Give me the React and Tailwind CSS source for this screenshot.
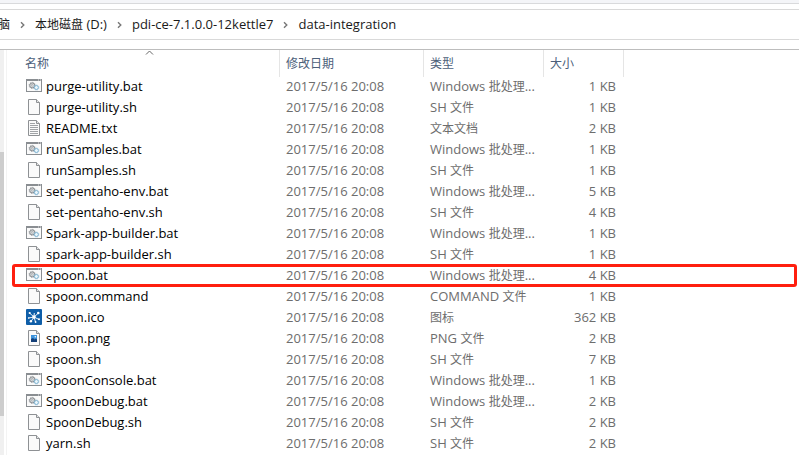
import React from "react";

const DATE = "2017/5/16 20:08";

const FILES = [
  { name: "purge-utility.bat", kind: "bat", type: ["Windows ", "批处理", "..."], size: "1 KB" },
  { name: "purge-utility.sh", kind: "file", type: ["SH ", "文件"], size: "1 KB" },
  { name: "README.txt", kind: "text", type: ["", "文本文档"], size: "2 KB" },
  { name: "runSamples.bat", kind: "bat", type: ["Windows ", "批处理", "..."], size: "1 KB" },
  { name: "runSamples.sh", kind: "file", type: ["SH ", "文件"], size: "1 KB" },
  { name: "set-pentaho-env.bat", kind: "bat", type: ["Windows ", "批处理", "..."], size: "5 KB" },
  { name: "set-pentaho-env.sh", kind: "file", type: ["SH ", "文件"], size: "4 KB" },
  { name: "Spark-app-builder.bat", kind: "bat", type: ["Windows ", "批处理", "..."], size: "1 KB" },
  { name: "spark-app-builder.sh", kind: "file", type: ["SH ", "文件"], size: "1 KB" },
  { name: "Spoon.bat", kind: "bat", type: ["Windows ", "批处理", "..."], size: "4 KB", marked: true },
  { name: "spoon.command", kind: "file", type: ["COMMAND ", "文件"], size: "1 KB" },
  { name: "spoon.ico", kind: "spoon", type: ["", "图标"], size: "362 KB" },
  { name: "spoon.png", kind: "image", type: ["PNG ", "文件"], size: "2 KB" },
  { name: "spoon.sh", kind: "file", type: ["SH ", "文件"], size: "7 KB" },
  { name: "SpoonConsole.bat", kind: "bat", type: ["Windows ", "批处理", "..."], size: "1 KB" },
  { name: "SpoonDebug.bat", kind: "bat", type: ["Windows ", "批处理", "..."], size: "2 KB" },
  { name: "SpoonDebug.sh", kind: "file", type: ["SH ", "文件"], size: "2 KB" },
  { name: "yarn.sh", kind: "file", type: ["SH ", "文件"], size: "2 KB" },
];

function BatIcon() {
  return (
    <svg viewBox="0 0 16 16" className="h-4 w-4 shrink-0" aria-hidden="true">
      <rect x="0.5" y="1.5" width="15" height="12" fill="#fafafa" stroke="#8a8e92" />
      <rect x="0" y="1" width="16" height="2" fill="#8a8e92" />
      <path d="M12 2h1M14 2h1" stroke="#fff" strokeWidth="0.8" />
      <circle cx="6.2" cy="7.4" r="2.5" fill="#e0e2e4" stroke="#85898d" />
      <circle cx="6.2" cy="7.4" r="3.1" fill="none" stroke="#85898d" strokeWidth="0.7" strokeDasharray="1.2 1.2" />
      <circle cx="6.2" cy="7.4" r="0.9" fill="#fff" stroke="#85898d" strokeWidth="0.6" />
      <circle cx="10.4" cy="9.5" r="2" fill="#eaf6fc" stroke="#7fb2d0" />
      <circle cx="10.4" cy="9.5" r="2.6" fill="none" stroke="#7fb2d0" strokeWidth="0.6" strokeDasharray="1 1" />
    </svg>
  );
}

function PageIcon({ children }) {
  return (
    <svg viewBox="0 0 16 16" className="h-4 w-4 shrink-0" aria-hidden="true">
      <path d="M2.5 0.5h8l3 3v12h-11z" fill="#fafafa" stroke="#8e9194" />
      <path d="M10.5 0.5v3h3" fill="#e4e5e6" stroke="#8e9194" />
      {children}
    </svg>
  );
}

function SpoonIcon() {
  return (
    <svg viewBox="0 0 16 16" className="h-4 w-4 shrink-0" aria-hidden="true">
      <rect width="16" height="16" rx="1" fill="#0f5ea8" />
      <path d="M3.5 4 8 8l4.5-4M2.5 9 8 8l5 2.5M5 12.5 8 8l1.5 5M8 8l.3-4" stroke="#fff" strokeWidth="0.9" fill="none" />
      <circle cx="8" cy="8" r="1.8" fill="#fff" />
      <circle cx="3.7" cy="4" r="1.1" fill="#fff" />
      <circle cx="12.3" cy="4" r="1.3" fill="#fff" />
      <circle cx="2.7" cy="9" r="0.8" fill="#fff" />
      <circle cx="13" cy="10.3" r="1" fill="#fff" />
      <circle cx="4.9" cy="12.3" r="1.2" fill="#fff" />
      <circle cx="9.6" cy="13" r="0.9" fill="#fff" />
    </svg>
  );
}

function FileIcon({ kind }) {
  if (kind === "bat") return <BatIcon />;
  if (kind === "spoon") return <SpoonIcon />;
  if (kind === "text") {
    return (
      <PageIcon>
        <path d="M4 3.5h5M4 5.5h8M4 7.5h8M4 9.5h8M4 11.5h8M4 13.5h8" stroke="#a0a3a6" />
      </PageIcon>
    );
  }
  if (kind === "image") {
    return (
      <PageIcon>
        <rect x="5" y="5" width="6" height="7" fill="#3d93dc" />
        <path d="M5 12V9l2-1 1.5 1.5L10 8.5l1 1V12z" fill="#153f78" />
        <circle cx="9.3" cy="6.7" r="0.8" fill="#fff" />
      </PageIcon>
    );
  }
  return <PageIcon />;
}

function Chevron() {
  return (
    <svg viewBox="0 0 5 8" className="h-2 w-[5px] shrink-0" aria-hidden="true">
      <path d="M1 1.2 3.8 4 1 6.8" fill="none" stroke="#777" strokeWidth="1.4" />
    </svg>
  );
}

function AddressBar() {
  return (
    <nav
      aria-label="路径"
      className="mt-[5px] flex h-[31px] items-center gap-2.5 overflow-hidden border-y border-[#d9d9d9] text-[13px] whitespace-nowrap text-[#1a1a1a]"
    >
      <a href="#pc" className="-ml-0.5 text-[12px]">脑</a>
      <Chevron />
      <a href="#d"><span className="text-[12px]">本地磁盘</span> (D:)</a>
      <Chevron />
      <a href="#pdi">pdi-ce-7.1.0.0-12kettle7</a>
      <Chevron />
      <a href="#data-integration">data-integration</a>
    </nav>
  );
}

const TH = "border-r border-[#e5e5e5] p-0 pl-1.5 text-left font-normal";

function FileTable() {
  return (
    <table className="w-full table-fixed border-separate border-spacing-0 text-[13px] leading-[18px] text-[#6d6d6d]">
      <colgroup>
        <col className="w-[273px]" />
        <col className="w-36" />
        <col className="w-[120px]" />
        <col className="w-20" />
        <col />
      </colgroup>
      <thead className="text-[12px] text-[#4c607a]">
        <tr className="h-[27px]">
          <th className="relative border-r border-[#e5e5e5] p-0 pl-[18px] text-left font-normal">
            名称
            <svg viewBox="0 0 9 5" className="absolute top-0 left-[138px] h-[5px] w-[9px]" aria-hidden="true">
              <path d="M1 4.5 4.5 1 8 4.5" fill="none" stroke="#666" />
            </svg>
          </th>
          <th className={TH}>修改日期</th>
          <th className={TH}>类型</th>
          <th className={TH}>大小</th>
          <td />
        </tr>
      </thead>
      <tbody>
        {FILES.map((file) => (
          <tr key={file.name} className="relative h-[21px] align-top">
            <td className="p-0 pl-[19px]">
              <div className="flex items-center gap-1 text-black">
                <FileIcon kind={file.kind} />
                {file.name}
              </div>
            </td>
            <td className="p-0 pl-1.5">{DATE}</td>
            <td className="p-0 pl-1.5 whitespace-nowrap">
              {file.type[0]}
              <span className="text-[12px]">{file.type[1]}</span>
              {file.type[2]}
            </td>
            <td className="p-0 pr-2 text-right">{file.size}</td>
            <td className="p-0">
              {file.marked && (
                <div className="pointer-events-none absolute -top-0.5 right-0.5 bottom-0 left-[5px] rounded-[3px] border-3 border-[#ff1f0f]" />
              )}
            </td>
          </tr>
        ))}
      </tbody>
    </table>
  );
}

export default function App() {
  return (
    <div className="min-h-screen bg-white font-['Open_Sans','Noto_Sans_CJK_SC',sans-serif]">
      <div className="h-1 border-b border-[#d9dadc] bg-[#f4f5f8]" />
      <AddressBar />
      <main className="mt-[9px] flex border-t border-[#bdbdbd]">
        <div className="flex w-1 shrink-0 flex-col bg-[#f0f0f0] pt-[102px] pb-[39px]">
          <div className="flex-1 bg-[#cdcdcd]" />
        </div>
        <div className="ml-0.5 min-w-0 flex-1 border-l border-[#f3f3f3]">
          <FileTable />
        </div>
      </main>
    </div>
  );
}
